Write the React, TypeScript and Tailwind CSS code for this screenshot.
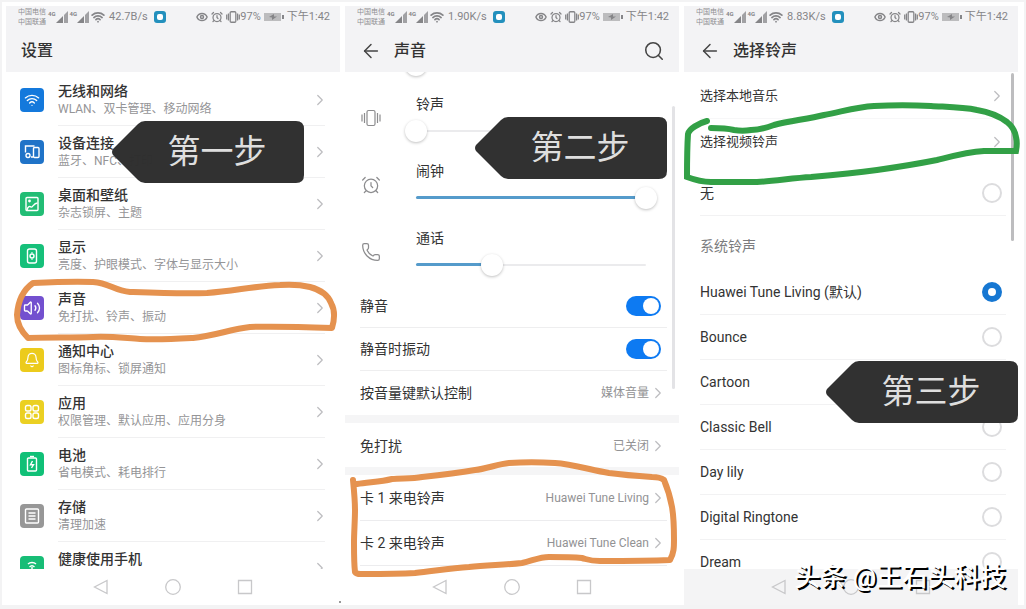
import {useState, type ReactNode} from "react";
import {AlarmClock, ArrowLeft, Bell, ChevronRight, Eye, Phone, Search, Volume2, Wifi} from "lucide-react";

const settings = [
	{title: "无线和网络", detail: "WLAN、双卡管理、移动网络", color: "bg-[#1479dc]", icon: "wifi"},
	{title: "设备连接", detail: "蓝牙、NFC、打印", color: "bg-[#1f73c8]", icon: "devices"},
	{title: "桌面和壁纸", detail: "杂志锁屏、主题", color: "bg-[#22bd75]", icon: "picture"},
	{title: "显示", detail: "亮度、护眼模式、字体与显示大小", color: "bg-[#16c07a]", icon: "display"},
	{title: "声音", detail: "免打扰、铃声、振动", color: "bg-[#7350cf]", icon: "sound"},
	{title: "通知中心", detail: "图标角标、锁屏通知", color: "bg-[#eccb1c]", icon: "bell"},
	{title: "应用", detail: "权限管理、默认应用、应用分身", color: "bg-[#ebd022]", icon: "apps"},
	{title: "电池", detail: "省电模式、耗电排行", color: "bg-[#10c077]", icon: "battery"},
	{title: "存储", detail: "清理加速", color: "bg-[#979797]", icon: "storage"},
	{title: "健康使用手机", color: "bg-[#17bd76]", icon: "health"},
];

const ringtones = ["Huawei Tune Living (默认)", "Bounce", "Cartoon", "Classic Bell", "Day lily", "Digital Ringtone", "Dream"];

function TileIcon({name}: {name: string}) {
	if (name === "wifi") return <Wifi className="size-4" strokeWidth={2} />;
	if (name === "sound") return <Volume2 className="size-[18px]" strokeWidth={1.8} />;
	if (name === "bell") return <Bell className="size-4" strokeWidth={1.8} />;

	return (
		<svg viewBox="0 0 18 18" className="size-[18px]" fill="none" stroke="currentColor" strokeWidth="1.4">
			{name === "devices" && (
				<>
					<path d="M2.5 9.5V3h9M8 14h2" />
					<rect x="10.5" y="4.5" width="5.5" height="10" rx="1" />
					<circle cx="5" cy="12.5" r="2" />
				</>
			)}
			{name === "picture" && (
				<>
					<rect x="3" y="2.5" width="12" height="13" rx="1" />
					<path d="M4 15c1-4 3-4 4-3 1.5 1 2.5-4 6.5-4" />
					<circle cx="6.5" cy="6" r=".7" />
				</>
			)}
			{name === "display" && (
				<>
					<rect x="4.5" y="2" width="9" height="14" rx="2" />
					<circle cx="9" cy="9" r="2" />
					<path d="M9 5.2v1M9 11.8v1" />
				</>
			)}
			{name === "apps" && (
				<>
					<rect x="2.5" y="2.5" width="5.5" height="5.5" rx="1.8" />
					<rect x="10" y="2.5" width="5.5" height="5.5" rx="1.8" />
					<rect x="2.5" y="10" width="5.5" height="5.5" rx="1.8" />
					<rect x="10" y="10" width="5.5" height="5.5" rx="1.8" />
				</>
			)}
			{name === "battery" && (
				<>
					<path d="M7 1.5h4" />
					<rect x="4.5" y="3" width="9" height="13" rx="1" />
					<path d="M9.5 6 7.5 9.7h3L8.5 13" />
				</>
			)}
			{name === "storage" && (
				<>
					<rect x="2.5" y="2" width="13" height="14" rx="1" />
					<path d="M5.5 6h7M5.5 9h7M5.5 12h7" />
				</>
			)}
			{name === "health" && <path d="M5 5c2-2 6-2 8 0M6.5 8c1.5-1.5 3.5-1.5 5 0M9 8v7" />}
		</svg>
	);
}

function VibrateIcon({className, strokeWidth}: {className: string; strokeWidth: number}) {
	return (
		<svg viewBox="0 0 20 20" className={className} fill="none" stroke="currentColor" strokeWidth={strokeWidth}>
			<rect x="6" y="2.5" width="8" height="15" rx="1.5" />
			<path d="M3.500 5v10M1 6.500v7M16.500 5v10M19 6.500v7" />
		</svg>
	);
}

function Signal() {
	return (
		<span className="flex items-start">
			<span className="text-[6px] leading-[6px] font-bold">4G</span>
			<svg viewBox="0 0 12 12" className="size-3" fill="currentColor">
				<path d="M0 12 7 5v7z" />
				<path d="M8 4 12 0v12H8z" opacity=".75" />
			</svg>
		</span>
	);
}

function StatusBar({speed}: {speed: string}) {
	return (
		<div className="flex h-[22px] shrink-0 items-center justify-between pr-[10px] pl-3 text-[11px] leading-4 text-[#858588]">
			<div className="flex items-center gap-[2px]">
				<div className="text-[7px] leading-[10px] text-[#909093]">
					<p>中国电信</p>
					<p>中国联通</p>
				</div>
				<Signal />
				<Signal />
				<Wifi className="size-[14px]" strokeWidth={3} />
				<span className="ml-[2px]">{speed}</span>
				<span className="ml-1 flex size-3 items-center justify-center rounded-[3px] bg-[#2390bd]">
					<span className="size-[6px] rounded-[2px] bg-white" />
				</span>
			</div>
			<div className="flex items-center gap-[3px]">
				<Eye className="size-3" strokeWidth={3} />
				<AlarmClock className="size-3" strokeWidth={2.5} />
				<span className="flex items-center">
					<VibrateIcon className="size-[14px]" strokeWidth={1.8} />
					97%
				</span>
				<svg viewBox="0 0 20 10" className="h-[10px] w-5" fill="currentColor">
					<path d="M0 1h17v8H0z" opacity=".5" />
					<path d="M18 3h2v4h-2zM5 5l5-3v2.5h3L8 8V5.5z" />
				</svg>
				<span>下午1:42</span>
			</div>
		</div>
	);
}

function NavBar({className}: {className: string}) {
	return (
		<nav className={`flex h-9 shrink-0 items-center justify-center gap-14 text-[#c8c8ca] ${className}`}>
			<button aria-label="返回">
				<svg viewBox="0 0 16 16" className="size-4" fill="none" stroke="currentColor" strokeWidth="1.3">
					<path d="M14 1.5v13L1.5 8z" />
				</svg>
			</button>
			<button aria-label="主屏幕">
				<svg viewBox="0 0 16 16" className="size-4" fill="none" stroke="currentColor" strokeWidth="1.3">
					<circle cx="8" cy="8" r="7.3" />
				</svg>
			</button>
			<button aria-label="最近任务">
				<svg viewBox="0 0 16 16" className="size-4" fill="none" stroke="currentColor" strokeWidth="1.3">
					<path d="M1.500 1.500h13v13h-13z" />
				</svg>
			</button>
		</nav>
	);
}

type ScreenProps = {
	title: string;
	speed: string;
	back?: boolean;
	search?: boolean;
	navClass?: string;
	children: ReactNode;
	overlay: ReactNode;
};

function Screen({title, speed, back, search, navClass = "bg-white", children, overlay}: ScreenProps) {
	return (
		<section className="relative flex min-h-0 min-w-0 flex-col">
			<header className="shrink-0 bg-[#f3f3f5]">
				<StatusBar speed={speed} />
				<div className="flex h-11 items-center pt-[2px] pr-[14px] pl-[15px]">
					{back && (
						<button aria-label="返回" className="mr-3 text-[#444]">
							<ArrowLeft className="size-[22px]" strokeWidth={1.6} />
						</button>
					)}
					<h2 className="grow text-base font-medium text-[#333]">{title}</h2>
					{search && (
						<button aria-label="搜索" className="text-[#444]">
							<Search className="size-[22px]" strokeWidth={1.7} />
						</button>
					)}
				</div>
			</header>
			<div className="min-h-0 grow overflow-hidden">{children}</div>
			<NavBar className={navClass} />
			{overlay}
		</section>
	);
}

function Callout({text, className}: {text: string; className: string}) {
	return (
		<div className={`absolute flex h-[62px] w-48 items-center justify-center pl-[18px] ${className}`}>
			<svg viewBox="0 0 192 62" className="absolute inset-0 size-full" fill="#2d2d2d" fillOpacity=".98">
				<path d="M1 28 26 3q3-3 7-3h151q8 0 8 8v46q0 8-8 8H33q-4 0-7-3L1 34q-2-3 0-6z" />
			</svg>
			<span className="relative text-[33px] leading-10 text-[#dedede]">{text}</span>
		</div>
	);
}

function VolumeSlider({label, value, onChange}: {label: string; value: number; onChange: (value: number) => void}) {
	return (
		<div className="grid h-[22px] items-center">
			<div className="col-start-1 row-start-1 h-[2px] rounded bg-[#ebebed]">
				<div className="-mt-px h-[3px] rounded bg-[#559bcb]" style={{width: `${value}%`}} />
			</div>
			<input
				type="range"
				aria-label={label}
				value={value}
				onChange={(e) => onChange(Number(e.target.value))}
				className="z-10 col-start-1 row-start-1 -mx-[11px] h-[22px] appearance-none bg-transparent [&::-webkit-slider-thumb]:size-[22px] [&::-webkit-slider-thumb]:appearance-none [&::-webkit-slider-thumb]:rounded-full [&::-webkit-slider-thumb]:bg-white [&::-webkit-slider-thumb]:shadow-[0_1px_3px_rgba(0,0,0,0.25)]"
			/>
		</div>
	);
}

function VolumeRow({label, initial, icon}: {label: string; initial: number; icon: ReactNode}) {
	const [value, setValue] = useState(initial);

	return (
		<div className="flex h-[67px] items-center pr-[33px] pl-4 text-[#8c8c8e]">
			{icon}
			<div className="ml-[35px] flex grow flex-col gap-[6px]">
				<p className="text-sm leading-5 text-[#333]">{label}</p>
				<VolumeSlider label={label} value={value} onChange={setValue} />
			</div>
		</div>
	);
}

function Toggle({label}: {label: string}) {
	return (
		<label className="flex h-[43px] items-center justify-between border-b border-[#eeeeef] pr-[6px] text-sm">
			{label}
			<input
				type="checkbox"
				role="switch"
				defaultChecked
				className="flex h-5 w-[35px] appearance-none items-center rounded-full bg-gray-300 p-[2px] before:size-4 before:rounded-full before:bg-white checked:justify-end checked:bg-[#0d7af2]"
			/>
		</label>
	);
}

function LinkRow({label, value, className = ""}: {label: string; value?: string; className?: string}) {
	return (
		<a href="#" className={`flex items-center text-[#333] ${className}`}>
			<span className="grow">{label}</span>
			{value && <span className="text-xs text-[#929294]">{value}</span>}
			<ChevronRight className="size-[18px] text-[#bcbcbf]" strokeWidth={1.6} />
		</a>
	);
}

function SettingsScreen() {
	return (
		<Screen
			title="设置"
			speed="42.7B/s"
			overlay={
				<>
					<Callout text="第一步" className="top-[115px] left-[106px]" />
					<svg viewBox="6 276 334 70" className="absolute top-[270px] left-0 h-[70px] w-[334px]" fill="none">
						<path
							d="M33 283C53 282 75 281 93 282C110 283 114 291 130 292C158 293 184 294 207 293C234 291 255 286 280 285C294 284 302 285 310 287C321 290 328 295 331 303C335 310 335 318 332 328C304 327 276 326 250 327C231 329 214 336 193 338C175 339 158 340 140 339C124 338 109 336 93 337C70 338 49 337 28 338C21 331 17 324 17 315C18 301 23 290 33 283z"
							stroke="#e5924f"
							strokeWidth="6"
							strokeLinejoin="round"
						/>
					</svg>
					<span className="absolute -right-px bottom-[2px] size-[2px] rounded-full bg-[#777]" />
				</>
			}>
			<ul className="pt-[2px]">
				{settings.map((item) => (
					<li key={item.title}>
						<a href="#" className="flex h-[52px] items-center gap-[14px] pr-[15px] pl-[14px]">
							<span className={`flex size-6 items-center justify-center rounded text-white ${item.color}`}>
								<TileIcon name={item.icon} />
							</span>
							<span className="flex h-full grow items-center border-b border-[#f0f0f1]">
								<span className="grow self-start pt-2">
									<span className="block text-sm leading-[18px] font-medium text-[#333]">{item.title}</span>
									{item.detail && <span className="block text-xs leading-[18px] text-[#959597]">{item.detail}</span>}
								</span>
								<ChevronRight className="-mr-1 size-[18px] text-[#bcbcbf]" strokeWidth={1.6} />
							</span>
						</a>
					</li>
				))}
			</ul>
		</Screen>
	);
}

function SoundScreen() {
	const [media, setMedia] = useState(0);

	return (
		<Screen
			title="声音"
			speed="1.90K/s"
			back
			search
			overlay={
				<>
					<div className="absolute top-[100px] right-1 h-[283px] w-[3px] rounded bg-[#e3e3e6]" />
					<Callout text="第二步" className="top-[111px] left-[130px]" />
					<svg viewBox="345 456 334 126" className="absolute top-[450px] left-0 h-[126px] w-[334px]" fill="none">
						<path
							d="M353 480C354 490 355 500 355 510C355 521 354 532 354 543C354 555 354 564 355 572C357 575 360 574 364 574C382 574 398 574 415 573C434 571 451 568 469 567C488 565 505 565 522 563C532 561 539 557 549 557C561 557 572 557 582 558C589 560 590 561 600 561C624 561 647 561 670 560C674 553 674 547 674 540C674 528 674 518 672 507C670 496 667 487 664 480C660 477 656 477 652 477C637 476 624 475 609 473C591 470 572 464 555 463C539 462 524 462 509 463C498 464 486 469 475 470C457 473 440 475 422 477C412 479 401 478 392 479C380 482 368 482 357 484"
							stroke="#e5924f"
							strokeWidth="6"
							strokeLinecap="round"
							strokeLinejoin="round"
						/>
					</svg>
				</>
			}>
			<div className="flex h-3 flex-col justify-end overflow-hidden pr-[33px] pb-2 pl-[71px]">
				<VolumeSlider label="媒体" value={media} onChange={setMedia} />
			</div>
			<VolumeRow label="铃声" initial={0} icon={<VibrateIcon className="size-5" strokeWidth={1.2} />} />
			<VolumeRow label="闹钟" initial={100} icon={<AlarmClock className="size-5" strokeWidth={1.5} />} />
			<VolumeRow label="通话" initial={33} icon={<Phone className="size-5" strokeWidth={1.5} />} />
			<div className="pr-3 pl-[15px] text-[#333]">
				<Toggle label="静音" />
				<Toggle label="静音时振动" />
				<LinkRow label="按音量键默认控制" value="媒体音量" className="h-11 text-sm" />
			</div>
			<div className="h-2 bg-[#f5f5f6]" />
			<LinkRow label="免打扰" value="已关闭" className="h-11 pt-[2px] pr-3 pl-[15px] text-sm" />
			<div className="h-2 bg-[#f5f5f6]" />
			<div className="pt-px pr-3 pl-[15px]">
				<LinkRow label="卡 1 来电铃声" value="Huawei Tune Living" className="h-[45px] border-b border-[#ececee] text-sm" />
				<LinkRow label="卡 2 来电铃声" value="Huawei Tune Clean" className="h-[45px] border-b border-[#ececee] text-sm" />
			</div>
		</Screen>
	);
}

function Choice({label}: {label: string}) {
	return (
		<label className="flex h-[45px] items-center justify-between border-b border-[#f2f2f3] pr-1 text-sm text-[#333]">
			{label}
			<input
				type="radio"
				name="ringtone"
				defaultChecked={label === ringtones[0]}
				className="size-5 appearance-none rounded-full border-2 border-[#dcdcde] checked:border-[6px] checked:border-[#1677d2]"
			/>
		</label>
	);
}

function RingtoneScreen() {
	return (
		<Screen
			title="选择铃声"
			speed="8.83K/s"
			back
			navClass="bg-[#f4f4f5]"
			overlay={
				<>
					<div className="absolute top-[67px] right-1 h-[168px] w-[3px] rounded bg-[#bdbdbf]" />
					<svg viewBox="684 96 340 96" className="absolute top-[90px] left-0 h-24 w-[340px]" fill="none">
						<path
							d="M707 121C699 123 689 129 688 134C687 149 687 164 687 177C695 180 703 182 711 182C727 182 742 182 757 182C775 181 793 178 811 177C834 175 855 173 877 170C898 167 917 164 937 160C953 156 967 152 984 151L1016 151C1017 146 1017 141 1016 137C1015 131 1012 126 1007 122C999 116 989 112 977 110C962 107 947 107 931 106C912 105 893 105 874 106C856 107 841 112 824 115C807 119 790 121 774 125C766 128 758 130 751 130C745 131 740 131 734 130C726 128 719 128 711 128"
							stroke="#32a046"
							strokeWidth="6"
							strokeLinecap="round"
						/>
					</svg>
					<Callout text="第三步" className="top-[355px] right-0" />
					<p className="absolute right-3 bottom-[10px] text-[26px] leading-9 font-medium whitespace-nowrap text-white [text-shadow:2px_2px_0_#000]">
						头条 @王石头科技
					</p>
				</>
			}>
			<div className="pt-[2px] pr-3 pl-4">
				<LinkRow label="选择本地音乐" className="h-[45px] border-b border-[#f7f7f8] text-[13px]" />
				<LinkRow label="选择视频铃声" className="h-[45px] text-[13px]" />
				<div className="h-[7px]" />
				<Choice label="无" />
				<h3 className="flex h-[54px] items-center pt-[6px] text-sm text-[#7c7c7e]">系统铃声</h3>
				{ringtones.map((name) => (
					<Choice key={name} label={name} />
				))}
			</div>
		</Screen>
	);
}

export default function App() {
	return (
		<main className="grid h-screen grid-cols-3 gap-[5px] overflow-hidden border-x-2 border-t-2 border-b-4 border-[#f3f3f4] bg-white pt-1 pr-[6px] pl-1 font-[Roboto,'Noto_Sans_CJK_SC',sans-serif]">
			<SettingsScreen />
			<SoundScreen />
			<RingtoneScreen />
		</main>
	);
}
